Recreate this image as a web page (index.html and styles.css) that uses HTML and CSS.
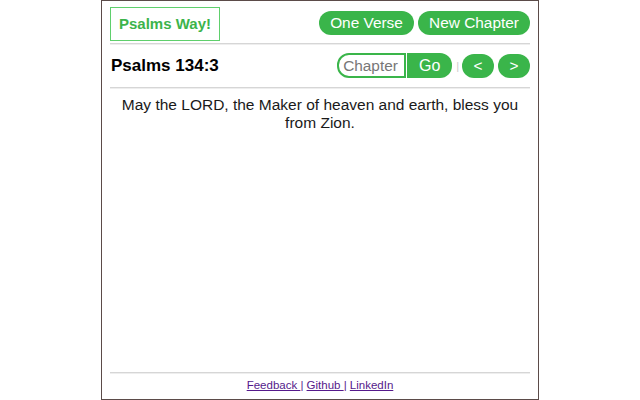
FILE: index.html
```html
<!DOCTYPE html>
<html lang="en">
<head>
<meta charset="utf-8">
<title>Psalms Way!</title>
<link rel="stylesheet" href="styles.css">
</head>
<body>
<div class="popup">
  <header class="top">
    <div class="logo">Psalms Way!</div>
    <div class="actions">
      <button class="pill wide1">One Verse</button>
      <button class="pill wide2">New Chapter</button>
    </div>
  </header>
  <hr class="rule">
  <div class="nav">
    <div class="ref">Psalms 134:3</div>
    <div class="controls">
      <input class="chap" type="text" placeholder="Chapter">
      <button class="go">Go</button>
      <span class="sep">|</span>
      <button class="pill arrow">&lt;</button>
      <button class="pill arrow">&gt;</button>
    </div>
  </div>
  <hr class="rule">
  <main class="verse">May the LORD, the Maker of heaven and earth, bless you from Zion.</main>
  <hr class="rule">
  <footer class="foot"><a href="#">Feedback </a>| <a href="#">Github </a>| <a href="#">LinkedIn</a></footer>
</div>
</body>
</html>
```
FILE: styles.css
```css
html, body {
  margin: 0;
  padding: 0;
  background: #ffffff;
}
body {
  font-family: "Liberation Sans", Arial, sans-serif;
}
.popup {
  box-sizing: border-box;
  width: 438px;
  height: 400px;
  margin: 0 auto;
  border: 1px solid #5b4b49;
  padding: 0 8px;
  display: flex;
  flex-direction: column;
}
.top {
  display: flex;
  justify-content: space-between;
  align-items: flex-start;
  padding: 6px 0 2px;
}
.logo {
  border: 1px solid #5fcf6c;
  padding: 8px 8px;
  line-height: 16px;
  font-size: 15px;
  font-weight: bold;
  color: #3cb44b;
}
.actions {
  display: flex;
  gap: 4px;
  margin-top: 4px;
}
.pill {
  font-family: "Liberation Sans", Arial, sans-serif;
  font-size: 15.4px;
  line-height: 24px;
  height: 24px;
  padding: 0;
  border: none;
  border-radius: 12px;
  background: #3ab54a;
  color: #ffffff;
  cursor: pointer;
}
.wide1 {
  width: 95px;
}
.wide2 {
  width: 112px;
}
.rule {
  margin: 0;
  height: 0;
  border: none;
  border-top: 1px solid #d6d6d6;
  border-bottom: 1px solid #eeeeee;
}
.nav {
  display: flex;
  justify-content: space-between;
  align-items: center;
  padding: 8px 0 9px 1px;
}
.ref {
  font-size: 17px;
  font-weight: bold;
  color: #000000;
}
.controls {
  display: flex;
  align-items: center;
}
.chap {
  box-sizing: border-box;
  width: 69px;
  height: 25px;
  border: 2px solid #3ab54a;
  border-radius: 12px 0 0 12px;
  padding: 0 3px 0 4px;
  font-family: "Liberation Sans", Arial, sans-serif;
  font-size: 15.4px;
  outline: none;
}
.chap::placeholder {
  color: #777777;
}
.go {
  margin-left: 1px;
  height: 25px;
  width: 45px;
  border: none;
  border-radius: 0 12px 12px 0;
  background: #3ab54a;
  color: #ffffff;
  font-family: "Liberation Sans", Arial, sans-serif;
  font-size: 16px;
  padding: 0;
}
.sep {
  font-size: 11px;
  color: #cccccc;
  margin: 0 3px 0 4px;
}
.arrow {
  width: 32px;
  height: 24px;
}
.arrow + .arrow {
  margin-left: 4px;
}
.verse {
  flex: 1;
  text-align: center;
  font-size: 15.5px;
  line-height: 18px;
  color: #1a1a1a;
  padding: 7px 4px 0;
}
.foot {
  text-align: center;
  font-size: 11.5px;
  color: #551a8b;
  padding: 4px 0 7px;
  line-height: 14px;
}
.foot a {
  color: #551a8b;
}
```
